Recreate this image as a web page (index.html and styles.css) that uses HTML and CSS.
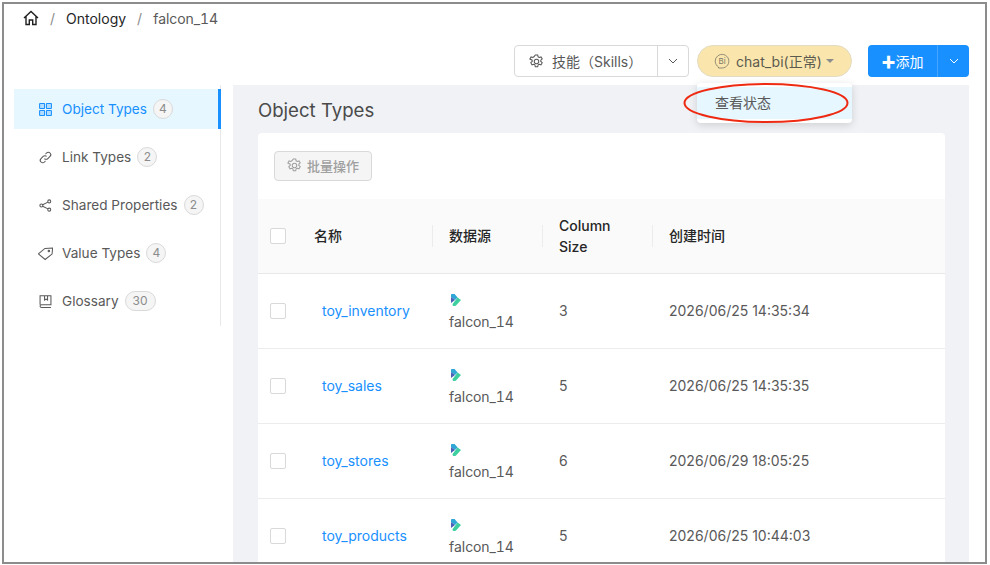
FILE: index.html
```html
<!DOCTYPE html>
<html lang="zh">
<head>
    <meta charset="UTF-8">
    <meta name="viewport" content="width=device-width, initial-scale=1.0">
    <title>Object Types - falcon_14</title>
    <link rel="stylesheet" href="styles.css">
</head>
<body>
    <div class="frame">
        <nav class="breadcrumb">
            <svg class="home-icon" viewBox="0 0 16 16"><path d="M1 8 8 1.5 15 8M3 6.5V14.5H6.3V10H9.7V14.5H13V6.5"/></svg>
            <span class="crumb-sep">/</span>
            <span class="crumb-link">Ontology</span>
            <span class="crumb-sep">/</span>
            <span class="crumb-current falcon">falcon_14</span>
        </nav>

        <div class="toolbar">
            <div class="skills-btn">
                <span class="skills-main">
                    <svg class="gear-icon" viewBox="0 0 16 16"><path d="M6.7 1h2.6l.4 2 1.2.7 1.9-.6 1.3 2.2-1.5 1.3v1.4l1.5 1.3-1.3 2.2-1.9-.6-1.2.7-.4 2H6.7l-.4-2-1.2-.7-1.9.6-1.3-2.2 1.5-1.3V6.6L.9 5.3l1.3-2.2 1.9.6 1.2-.7z"/><circle cx="8" cy="8" r="2.4"/></svg>
                    技能（Skills）
                </span>
                <span class="skills-arrow"><svg class="chevron" viewBox="0 0 10 6"><path d="M1 1 5 5 9 1"/></svg></span>
            </div>
            <div class="agent-wrap">
                <div class="agent-pill">
                    <svg class="bi-icon" viewBox="0 0 16 16"><path d="M4.5 14A6.8 6.8 0 1 1 8 15H4.5z"/><text x="8" y="11" text-anchor="middle">Bi</text></svg>
                    chat_bi(正常)
                    <span class="caret"></span>
                </div>
                <div class="agent-menu"><div class="agent-menu-item">查看状态</div></div>
            </div>
            <div class="add-btn">
                <span class="add-main">✚添加</span>
                <span class="add-arrow"><svg class="chevron" viewBox="0 0 10 6"><path d="M1 1 5 5 9 1"/></svg></span>
            </div>
        </div>

        <div class="content">
            <ul class="sidebar">
                <li class="side-item active">
                    <svg class="side-icon" viewBox="0 0 16 16"><rect x="1.700" y="1.700" width="5.300" height="5.300" rx=".5"/><rect x="9" y="1.700" width="5.300" height="5.300" rx=".5"/><rect x="1.700" y="9" width="5.300" height="5.300" rx=".5"/><rect x="9" y="9" width="5.300" height="5.300" rx=".5"/></svg>
                    <span>Object Types</span><span class="count">4</span>
                </li>
                <li class="side-item">
                    <svg class="side-icon" viewBox="0 0 16 16"><path d="M6.8 9.2a2.6 2.6 0 0 0 3.7 0l2.3-2.3a2.6 2.6 0 0 0-3.7-3.7L8 4.3"/><path d="M9.2 6.8a2.6 2.6 0 0 0-3.7 0L3.2 9.1a2.6 2.6 0 0 0 3.7 3.7L8 11.7"/></svg>
                    <span>Link Types</span><span class="count">2</span>
                </li>
                <li class="side-item">
                    <svg class="side-icon" viewBox="0 0 16 16"><circle cx="3.6" cy="8" r="1.6"/><circle cx="12" cy="3.6" r="1.6"/><circle cx="12" cy="12.4" r="1.6"/><path d="M5 7.2 10.6 4.4M5 8.8l5.6 2.8"/></svg>
                    <span>Shared Properties</span><span class="count">2</span>
                </li>
                <li class="side-item">
                    <svg class="side-icon" viewBox="0 0 16 16"><path d="M.4 8.4 7.4 2.6 15.600 2.200 15 8.600 7.600 14.400z"/><circle cx="11.600" cy="5.400" r=".8"/></svg>
                    <span>Value Types</span><span class="count">4</span>
                </li>
                <li class="side-item">
                    <svg class="side-icon" viewBox="0 0 16 16"><path d="M2.2 11.4V1.8h11.6v9.6H4a1.6 1.6 0 0 0-1.8 1.6M2.2 13c0 .8.7 1.3 1.6 1.3h10M7 1.8v4.6l1.6-1 1.6 1V1.8"/></svg>
                    <span>Glossary</span><span class="count count-wide">30</span>
                </li>
            </ul>

            <main class="panel">
                <h2 class="panel-title">Object Types</h2>
                <div class="card">
                    <div class="card-actions">
                        <button class="batch-btn" disabled>
                            <svg class="gear-icon" viewBox="0 0 16 16"><path d="M6.7 1h2.6l.4 2 1.2.7 1.9-.6 1.3 2.2-1.5 1.3v1.4l1.5 1.3-1.3 2.2-1.9-.6-1.2.7-.4 2H6.7l-.4-2-1.2-.7-1.9.6-1.3-2.2 1.5-1.3V6.6L.9 5.3l1.3-2.2 1.9.6 1.2-.7z"/><circle cx="8" cy="8" r="2.4"/></svg>
                            批量操作
                        </button>
                    </div>
                    <table class="types-table">
                        <colgroup>
                            <col class="col-check"><col class="col-name"><col class="col-source"><col class="col-size"><col>
                        </colgroup>
                        <thead>
                            <tr>
                                <th><span class="checkbox"></span></th>
                                <th>名称</th>
                                <th>数据源</th>
                                <th>Column Size</th>
                                <th>创建时间</th>
                            </tr>
                        </thead>
                        <tbody>
                            <tr>
                                <td><span class="checkbox"></span></td>
                                <td><a class="name-link">toy_inventory</a></td>
                                <td class="source-cell"><svg class="source-logo" viewBox="0 0 10 12"><path class="logo-blue" d="M0 .8Q0 0 .8 0H3.6L6.6 3.6 4 6 0 3z"/><path class="logo-violet" d="M0 3 4 6 0 9z"/><path class="logo-green" d="M10 6 5 11.6Q4.600 12 4 12H2.400Q.8 11.400 1.800 9.800L6.600 3.600z"/></svg><div class="falcon">falcon_14</div></td>
                                <td>3</td>
                                <td>2026/06/25 14:35:34</td>
                            </tr>
                            <tr>
                                <td><span class="checkbox"></span></td>
                                <td><a class="name-link">toy_sales</a></td>
                                <td class="source-cell"><svg class="source-logo" viewBox="0 0 10 12"><path class="logo-blue" d="M0 .8Q0 0 .8 0H3.6L6.6 3.6 4 6 0 3z"/><path class="logo-violet" d="M0 3 4 6 0 9z"/><path class="logo-green" d="M10 6 5 11.6Q4.600 12 4 12H2.400Q.8 11.400 1.800 9.800L6.600 3.600z"/></svg><div class="falcon">falcon_14</div></td>
                                <td>5</td>
                                <td>2026/06/25 14:35:35</td>
                            </tr>
                            <tr>
                                <td><span class="checkbox"></span></td>
                                <td><a class="name-link">toy_stores</a></td>
                                <td class="source-cell"><svg class="source-logo" viewBox="0 0 10 12"><path class="logo-blue" d="M0 .8Q0 0 .8 0H3.6L6.6 3.6 4 6 0 3z"/><path class="logo-violet" d="M0 3 4 6 0 9z"/><path class="logo-green" d="M10 6 5 11.6Q4.600 12 4 12H2.400Q.8 11.400 1.800 9.800L6.600 3.600z"/></svg><div class="falcon">falcon_14</div></td>
                                <td>6</td>
                                <td>2026/06/29 18:05:25</td>
                            </tr>
                            <tr>
                                <td><span class="checkbox"></span></td>
                                <td><a class="name-link">toy_products</a></td>
                                <td class="source-cell"><svg class="source-logo" viewBox="0 0 10 12"><path class="logo-blue" d="M0 .8Q0 0 .8 0H3.6L6.6 3.6 4 6 0 3z"/><path class="logo-violet" d="M0 3 4 6 0 9z"/><path class="logo-green" d="M10 6 5 11.6Q4.600 12 4 12H2.400Q.8 11.400 1.800 9.800L6.600 3.600z"/></svg><div class="falcon">falcon_14</div></td>
                                <td>5</td>
                                <td>2026/06/25 10:44:03</td>
                            </tr>
                        </tbody>
                    </table>
                </div>
            </main>
        </div>

        <svg class="annotation" viewBox="0 0 170 44"><ellipse cx="85" cy="22" rx="81.500" ry="19"/></svg>
    </div>
</body>
</html>
```

FILE: styles.css
```css
* {
    box-sizing: border-box;
}
html, body {
    margin: 0;
    height: 565px;
    overflow: hidden;
    background: #fff;
}
body {
    padding: 2px 0 0 2px;
    font-family: Inter, "Noto Sans CJK SC", sans-serif;
    font-size: 14px;
    color: #595959;
}
.frame {
    position: relative;
    width: 985px;
    height: 562px;
    border: 2px solid #8c8c8c;
    overflow: hidden;
    background: #fff;
}
/* the 1 sets wider here than the installed Inter gives it */
.falcon {
    font-variant-numeric: tabular-nums;
    font-kerning: none;
    letter-spacing: -.1px;
}

/* breadcrumb */
.breadcrumb {
    height: 28px;
    padding: 0 0 0 19px;
    display: flex;
    align-items: center;
    gap: 10px;
    font-size: 14px;
}
.home-icon {
    width: 16px;
    height: 16px;
    fill: none;
    stroke: #1f1f1f;
    stroke-width: 1.4;
}
.crumb-sep {
    color: #8c8c8c;
    margin: 0 1px;
}
.crumb-link {
    color: #262626;
}

/* toolbar */
.toolbar {
    height: 53px;
    padding: 13px 16px 0 0;
    display: flex;
    justify-content: flex-end;
    align-items: flex-start;
    gap: 8px;
}
.gear-icon {
    width: 15px;
    height: 15px;
    fill: none;
    stroke: currentColor;
    stroke-width: 1.1;
}
.chevron {
    width: 10px;
    height: 6px;
    fill: none;
    stroke: currentColor;
    stroke-width: 1;
}
.skills-btn {
    display: flex;
    height: 32px;
    width: 175px;
    border: 1px solid #d9d9d9;
    border-radius: 4px;
}
.skills-main {
    width: 143px;
    display: flex;
    align-items: center;
    gap: 8px;
    padding-left: 14px;
    border-right: 1px solid #d9d9d9;
}
.skills-arrow {
    flex: 1;
    display: flex;
    align-items: center;
    justify-content: center;
    color: #595959;
}
.agent-wrap {
    position: relative;
}
.agent-pill {
    width: 155px;
    height: 32px;
    display: flex;
    align-items: center;
    padding-left: 16px;
    gap: 6px;
    background: #fae6ad;
    border: 1px solid #e3dcc4;
    border-radius: 16px;
    color: #5c5a4e;
}
.bi-icon {
    width: 16px;
    height: 16px;
    fill: none;
    stroke: #7a7768;
    stroke-width: .8;
}
.bi-icon text {
    font-size: 8px;
    fill: #7a7768;
    stroke: none;
}
.caret {
    margin-left: -2px;
    border: 4px solid transparent;
    border-top-color: #8c8c8c;
    border-bottom: 0;
}
.agent-menu {
    position: absolute;
    top: 38px;
    left: 0;
    z-index: 2;
    width: 155px;
    padding: 4px 0;
    background: #fff;
    border-radius: 4px;
    box-shadow: 0 2px 8px rgba(0, 0, 0, 0.15);
}
.agent-menu-item {
    height: 32px;
    line-height: 32px;
    padding-left: 18px;
    background: #e6f7ff;
    color: #595959;
}
.add-btn {
    display: flex;
    height: 32px;
    width: 101px;
    margin-left: 8px;
    background: #1890ff;
    border-radius: 4px;
    color: #fff;
}
.add-main {
    width: 70px;
    display: flex;
    align-items: center;
    justify-content: center;
    border-right: 1px solid #46a6ff;
}
.add-arrow {
    flex: 1;
    display: flex;
    align-items: center;
    justify-content: center;
}

/* body */
.content {
    display: flex;
    height: 480px;
    padding-left: 10px;
}
.sidebar {
    width: 207px;
    height: 241px;
    margin: 0;
    padding: 0;
    list-style: none;
    border-right: 1px solid #e8e8e8;
    font-size: 13.6px;
}
.side-item {
    height: 40px;
    margin: 4px 0 8px;
    display: flex;
    align-items: center;
    padding-left: 24px;
}
.side-item.active {
    margin-right: -1px;
    background: #e6f7ff;
    border-right: 3px solid #1890ff;
    color: #1890ff;
}
.side-icon {
    width: 15px;
    height: 15px;
    margin-right: 9px;
    fill: none;
    stroke: currentColor;
    stroke-width: 1.1;
}
.side-item.active .side-icon {
    fill: rgba(24, 144, 255, 0.25);
}
.count {
    width: 20px;
    height: 20px;
    line-height: 18px;
    margin-left: 6px;
    text-align: center;
    font-size: 12px;
    color: #8c8c8c;
    background: #f5f5f5;
    border: 1px solid #d9d9d9;
    border-radius: 10px;
}
.count-wide {
    width: 31px;
}
.panel {
    width: 736px;
    margin-left: 12px;
    padding: 0 24px 0 25px;
    background: #f0f2f5;
}
.panel-title {
    margin: 0;
    height: 48px;
    line-height: 51px;
    font-size: 18.6px;
    font-weight: 400;
    color: #4a4a4a;
}
.card {
    background: #fff;
    border-radius: 4px 4px 0 0;
}
.card-actions {
    height: 66px;
    padding: 18px 16px 0;
}
.batch-btn {
    height: 30px;
    width: 98px;
    display: flex;
    align-items: center;
    justify-content: center;
    gap: 5px;
    padding: 0 0 2px;
    font-family: inherit;
    font-size: 13px;
    font-weight: 500;
    color: #a0a0a0;
    background: #f5f5f5;
    border: 1px solid #d9d9d9;
    border-radius: 4px;
}
.types-table {
    width: 100%;
    table-layout: fixed;
    border-collapse: collapse;
}
.col-check {
    width: 40px;
}
.col-name {
    width: 135px;
}
.col-source,
.col-size {
    width: 110px;
}
.types-table th {
    position: relative;
    height: 74px;
    padding: 0 16px;
    text-align: left;
    font-weight: 500;
    color: #262626;
    background: #fafafa;
    border-bottom: 1px solid #e8e8e8;
    line-height: 21px;
}
.types-table th + th + th::before {
    content: "";
    position: absolute;
    left: -1px;
    top: 26px;
    height: 22px;
    width: 1px;
    background: #ececec;
}
.types-table td {
    height: 75px;
    padding: 0 16px;
    border-bottom: 1px solid #ececec;
}
.types-table th:first-child,
.types-table td:first-child {
    padding: 0 0 0 12px;
}
.types-table td.source-cell {
    padding-top: 2px;
}
.checkbox {
    display: block;
    width: 16px;
    height: 16px;
    background: #fff;
    border: 1px solid #d9d9d9;
    border-radius: 2px;
}
.name-link {
    margin-left: 8px;
    color: #1890ff;
}
.source-logo {
    display: block;
    width: 10px;
    height: 12px;
    margin: 0 0 7px 2px;
}
.logo-blue {
    fill: #2fa6d6;
}
.logo-green {
    fill: #3ecfa0;
}
.logo-violet {
    fill: #4a5fb5;
}

/* red hand-drawn ring */
.annotation {
    position: absolute;
    left: 677px;
    top: 77px;
    width: 170px;
    height: 44px;
    z-index: 3;
    fill: none;
    stroke: #ee2a12;
    stroke-width: 2;
}
```
